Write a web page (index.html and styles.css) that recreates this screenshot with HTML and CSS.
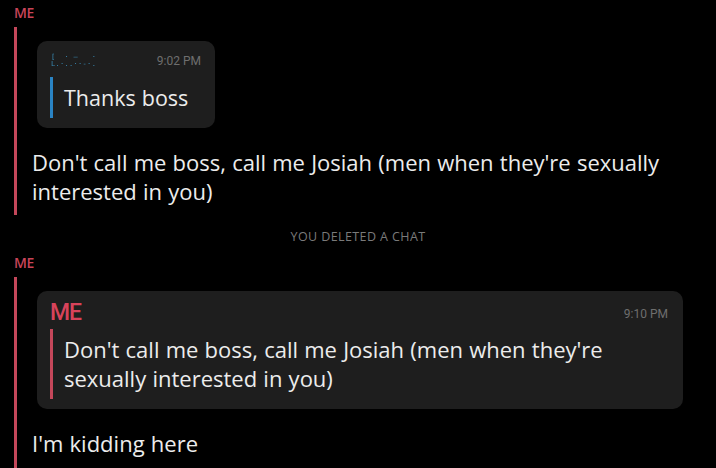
FILE: index.html
```html
<!DOCTYPE html>
<html>
<head>
<meta charset="utf-8">
<link rel="stylesheet" href="styles.css">
</head>
<body>
<div class="chat">
  <section class="group">
    <div class="sender">ME</div>
    <div class="thread">
      <div class="card card-small">
        <div class="card-head">
          <span class="blurred"><span class="bl-a">[ &nbsp;· ‒ &nbsp;&nbsp;·</span><span class="bl-b">L.·..··-·.</span></span>
          <span class="time">9:02 PM</span>
        </div>
        <div class="quote quote-blue">Thanks boss</div>
      </div>
      <p class="msg">Don't call me boss, call me Josiah (men when they're sexually interested in you)</p>
    </div>
  </section>
  <div class="notice">YOU DELETED A CHAT</div>
  <section class="group">
    <div class="sender">ME</div>
    <div class="thread thread-open">
      <div class="card card-wide">
        <div class="card-head">
          <span class="card-sender">ME</span>
          <span class="time">9:10 PM</span>
        </div>
        <div class="quote quote-red">Don't call me boss, call me Josiah (men when they're sexually interested in you)</div>
      </div>
      <p class="msg">I'm kidding here</p>
    </div>
  </section>
</div>
</body>
</html>
```
FILE: styles.css
```css
html, body {
  margin: 0;
  padding: 0;
  background: #000;
}
body {
  width: 716px;
  height: 468px;
  overflow: hidden;
  font-family: "Open Sans", Lato, sans-serif;
  color: #e8e8e8;
}
.chat {
  display: flex;
  flex-direction: column;
  padding-top: 5px;
}
.sender {
  font-family: "Open Sans", sans-serif;
  font-size: 14px;
  font-weight: 600;
  color: #c94458;
  line-height: 15px;
  padding-left: 14px;
  letter-spacing: -0.3px;
}
.thread {
  margin-left: 14px;
  margin-top: 7px;
  border-left: 3px solid #c4475a;
  padding-left: 15px;
  display: flex;
  flex-direction: column;
  align-items: flex-start;
}
.card {
  background: #1e1e1e;
  border-radius: 10px;
  margin-left: 5px;
  box-sizing: border-box;
}
.card-small {
  margin-top: 14px;
  width: 178px;
  height: 87px;
  padding: 12px 14px 0 14px;
}
.card-wide {
  margin-top: 14px;
  width: 646px;
  height: 118px;
  padding: 12px 15px 0 13px;
}
.card-head {
  display: flex;
  justify-content: space-between;
  align-items: center;
}
.card-small .card-head { height: 16px; }
.card-wide .card-head { height: 20px; }
.time {
  font-family: Roboto, sans-serif;
  font-size: 12px;
  color: #6e6e6e;
}
.card-wide .time { padding-top: 2px; }
.blurred {
  display: flex;
  flex-direction: column;
  font-family: "DejaVu Sans Mono", monospace;
  font-size: 7px;
  line-height: 7px;
  color: #3a8db8;
  filter: blur(0.5px);
  letter-spacing: 0.3px;
  white-space: pre;
}
.card-sender {
  font-family: Roboto, sans-serif;
  font-size: 23px;
  font-weight: 500;
  color: #d8435a;
  letter-spacing: -1.2px;
  line-height: 20px;
}
.quote {
  font-size: 22px;
  word-spacing: 0.5px;
  color: #ececec;
  padding-left: 11px;
  border-left: 3px solid;
}
.quote-blue {
  border-color: #2a84c4;
  margin-top: 8px;
  margin-left: -1px;
  height: 41px;
  line-height: 41px;
  font-size: 21.5px;
}
.quote-red {
  border-color: #c4475a;
  margin-top: 6px;
  line-height: 29px;
  padding-top: 6px;
  padding-bottom: 6px;
  margin-right: 40px;
}
.msg {
  margin: 0;
  font-size: 22px;
  word-spacing: 0.5px;
  line-height: 29px;
  color: #ececec;
  padding-top: 20px;
  padding-bottom: 9px;
}
.thread-open {
  height: 200px;
}
.notice {
  text-align: center;
  font-family: "Open Sans", sans-serif;
  font-size: 12.5px;
  color: #7a7a7a;
  letter-spacing: 0.4px;
  padding-top: 15px;
  padding-bottom: 12px;
  line-height: 13px;
}
```
